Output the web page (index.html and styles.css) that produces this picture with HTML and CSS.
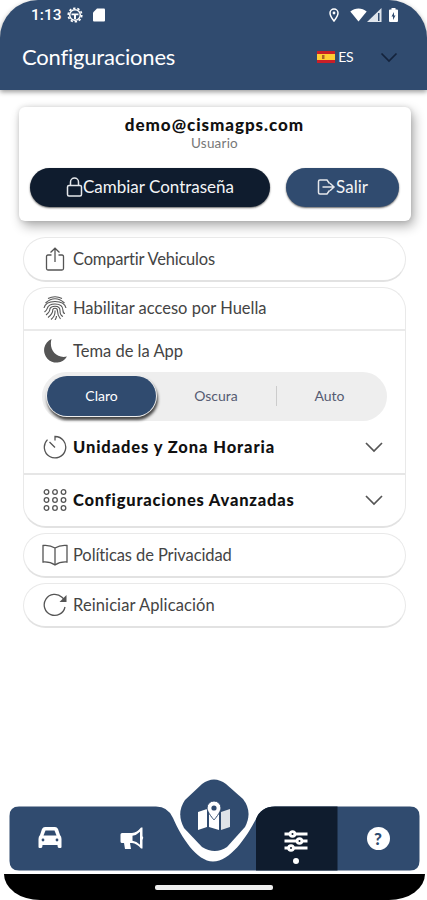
FILE: index.html
```
<!DOCTYPE html>
<html lang="es">
<head>
  <meta charset="UTF-8">
  <meta name="viewport" content="width=device-width, initial-scale=1">
  <title>Configuraciones</title>
  <link rel="stylesheet" href="styles.css">
</head>
<body>
  <header class="header">
    <div class="status-bar">
      <span class="time">1:13</span>
      <svg class="gear" width="16" height="16" viewBox="0 0 16 16">
        <circle cx="8" cy="8" r="6.8" fill="none" stroke="#fff" stroke-width="1.6" stroke-dasharray="2.4 1.87"/>
        <circle cx="8" cy="8" r="5.3" fill="none" stroke="#fff" stroke-width="1.5"/>
        <path d="M4.5 6.4h7v1.8h-7z M7 8h2v4H7z" fill="#fff"/>
      </svg>
      <svg width="12" height="14" viewBox="0 0 12 14"><path d="M4 .5h7q1 0 1 1v11q0 1-1 1H1q-1 0-1-1V4.5z" fill="#fff"/></svg>
      <div class="status-right">
        <svg class="pin" width="10" height="14" viewBox="0 0 10 14"><path d="M5 1a4 4 0 0 1 4 4c0 3-4 8-4 8S1 8 1 5a4 4 0 0 1 4-4z" fill="none" stroke="#fff" stroke-width="1.5"/><circle cx="5" cy="5" r="1.4" fill="#fff"/></svg>
        <svg class="wifi" width="17" height="14" viewBox="0 0 17 14"><path d="M.3 3.5C5-.6 12-.6 16.7 3.5L8.5 13.6z" fill="#fff"/></svg>
        <svg class="signal" width="15" height="14" viewBox="0 0 15 14"><path d="M14.5 0v14H0z" fill="#dfe5ec"/><path d="M11 5h1.5v8H11z" fill="#304b6f"/></svg>
        <svg width="9" height="14" viewBox="0 0 9 14"><path d="M2.500 0h4v1.500H8q1 0 1 1V13q0 1-1 1H1q-1 0-1-1V2.500q0-1 1-1h1.500z" fill="#fff"/><path d="M5 4 2.500 8.500H4V12l2.500-4.500H5z" fill="#304b6f"/></svg>
      </div>
    </div>
    <div class="title-bar">
      <h1>Configuraciones</h1>
      <div class="lang">
        <svg width="18" height="12" viewBox="0 0 18 12"><path d="M0 0h18v12H0z" fill="#c91f27"/><path d="M0 3h18v6H0z" fill="#fc3"/><path d="M5 4h2.500v4H5z" fill="#ad6228"/></svg>
        <span>ES</span>
        <svg class="lang-arrow" width="18" height="11" viewBox="0 0 18 11"><path d="m1.500 1.500 7.500 7.500 7.500-7.500" fill="none" stroke="#14233c" stroke-width="1.700"/></svg>
      </div>
    </div>
  </header>

  <main>
    <section class="user-card">
      <div class="email">demo@cismagps.com</div>
      <div class="role">Usuario</div>
      <div class="buttons">
        <button class="btn btn-dark">
          <svg width="17" height="20" viewBox="0 0 17 20" fill="none" stroke="#e5e8ec" stroke-width="1.500"><rect x="1.500" y="8.500" width="14" height="10.500" rx="1.500"/><path d="M4.500 8.500V5a4 4 0 0 1 8 0v3.500"/></svg>
          <span>Cambiar Contraseña</span>
        </button>
        <button class="btn btn-blue">
          <svg width="19" height="16" viewBox="0 0 19 16" fill="none" stroke="#e5e8ec" stroke-width="1.500"><path d="M12.500 4.500 10 1H3Q1.500 1 1.500 2.500v11Q1.500 15 3 15h7l2.500-3.500M5.500 8H17M13 4.200 17 8l-4 3.800"/></svg>
          <span>Salir</span>
        </button>
      </div>
    </section>

    <section class="box row share">
      <svg class="icon" viewBox="0 0 24 24"><path d="M8.500 8H5Q3.500 8 3.500 9.500v12Q3.500 23 5 23h14q1.500 0 1.500-1.500v-12Q20.500 8 19 8h-3.500M12 15V1.500M7.500 5.500 12 1.200l4.500 4.300"/></svg>
      <span class="share-text">Compartir Vehiculos</span>
    </section>

    <section class="box group">
      <div class="row finger">
        <svg class="icon print" viewBox="0 0 24 24"><path d="M5 2.500Q12-1 19 2.500M2.500 7Q12-1.500 21.500 7M1 12Q2.500 5.500 12 5.500T23 12M1.500 16Q4 14 4.200 12.500Q5.500 8 12 8q8 0 8 6.500 0 3 2 3M3 19q4-3 4-6.500 1-2.200 5-2.200 5 0 5 4.200 0 5 3 6M5 21.500q5-3.500 4.800-8 .7-1.200 2.200-1.200 2.500 0 2.500 2.700 0 4.500 3 8M8 23.500q4.500-3.500 4-9M12 24q1.500-2 1.500-4"/></svg>
        <span>Habilitar acceso por Huella</span>
      </div>
      <div class="theme">
        <div class="row theme-head">
          <svg class="icon moon" viewBox="0 0 24 24"><path d="M8.500 0A12.300 12.300 0 1 0 24 17.500C13.500 20 5.500 11 8.500 0z"/></svg>
          <span>Tema de la App</span>
        </div>
        <div class="segment">
          <div class="option active">Claro</div>
          <div class="option">Oscura</div>
          <div class="option auto">Auto</div>
        </div>
      </div>
      <div class="row units">
        <svg class="icon" viewBox="0 0 24 24"><path d="M12 5.500V1.500A10.700 10.700 0 1 1 4.500 4.600M6.500 7l5.500 5.500"/></svg>
        <span>Unidades y Zona Horaria</span>
        <svg class="arrow" width="18" height="11" viewBox="0 0 18 11"><path d="m1 1 8 8 8-8"/></svg>
      </div>
      <div class="row advanced">
        <svg class="icon" viewBox="0 0 24 24"><circle cx="3.500" cy="4" r="2.300"/><circle cx="12" cy="4" r="2.300"/><circle cx="20.500" cy="4" r="2.300"/><circle cx="3.500" cy="12" r="2.300"/><circle cx="12" cy="12" r="2.300"/><circle cx="20.500" cy="12" r="2.300"/><circle cx="3.500" cy="20" r="2.300"/><circle cx="12" cy="20" r="2.300"/><circle cx="20.500" cy="20" r="2.300"/></svg>
        <span>Configuraciones Avanzadas</span>
        <svg class="arrow" width="18" height="11" viewBox="0 0 18 11"><path d="m1 1 8 8 8-8"/></svg>
      </div>
    </section>

    <section class="box row">
      <svg class="icon book" viewBox="0 0 26 22"><path d="M13 4Q8 .8 1 1.500v16.500q7-.5 12 3 5-3.500 12-3V1.500Q18 .8 13 4zM13 4v17"/></svg>
      <span class="privacy-text">Políticas de Privacidad</span>
    </section>

    <section class="box row">
      <svg class="icon" viewBox="0 0 24 24"><path d="M22 14A10.500 10.500 0 1 1 19 4.300l3.500 3.500"/><path d="M23.500 2v7h-7z" fill="#555" stroke="none"/></svg>
      <span class="reset-text">Reiniciar Aplicación</span>
    </section>
  </main>

  <nav class="nav">
    <svg class="nav-shape" width="427" height="98" viewBox="0 776 427 98">
      <path d="M19 806.500H156Q168 806.500 173 818C181 837 197 861.500 213 861.500C230 861.500 246 838 256 819Q261 806.500 275 806.500H410Q419.500 806.500 419.500 816V861Q419.500 870.500 410 870.500H19Q9.500 870.500 9.500 861V816Q9.500 806.500 19 806.500z" fill="#304b6f"/>
      <path d="M256 870.500V819Q261 806.500 275 806.500H337.500V870.500z" fill="#0f1c2e"/>
      <path d="M202 784Q214 775 226 784L243 799Q253 812 245 827L227 847Q215 855 202 847L184 828Q176 813 185 800z" fill="#304b6f"/>
    </svg>
    <a class="tab"><svg width="24" height="22" viewBox="0 0 24 22"><path d="M7 0h10q2 0 3 2l2 6q1.500 1.500 1.500 4v8q0 1-1 1H21q-1.500 0-1.500-3h-15q0 3-1.500 3H1.500q-1 0-1-1v-8q0-2.500 1.500-4l2-6q1-2 3-2z" fill="#fff"/><path d="M7.500 3.500h9l2 5h-13z" fill="#304b6f"/><circle cx="5" cy="13" r="1.400" fill="#304b6f"/><circle cx="19" cy="13" r="1.400" fill="#304b6f"/></svg></a>
    <a class="tab"><svg width="24" height="23" viewBox="0 0 24 23"><path d="M2 6h10q5-.5 9-5.500h1.500V9q1.500 1.500 0 4v8.500H21q-4-5-9-5.500h-2l1 6H5l-1-6H2q-1.500 0-1.500-1.500v-7Q.500 6 2 6z" fill="#fff"/><path d="M12.500 8.800q4-.5 7.500-4v13q-3.500-3.500-7.500-4z" fill="#304b6f"/></svg></a>
    <a class="tab map"><svg width="32" height="29" viewBox="0 0 32 29" fill="#fff"><path d="M0 11l9-3v18l-9 3zM11 9l10 3v17l-10-3z"/><path d="M23 11l9-3v18l-9 3z" fill="#dfe3e8"/><path d="M16 0a7 7 0 0 1 7 7c0 4-7 12-7 12S9 11 9 7a7 7 0 0 1 7-7z" stroke="#304b6f" stroke-width="1"/><circle cx="16" cy="7" r="2.600" fill="#304b6f"/></svg></a>
    <a class="tab current"><svg width="24" height="22" viewBox="0 0 24 22" fill="#0f1c2e" stroke="#fff" stroke-width="2.800"><path d="M.5 4h23M.5 11h23M.5 18h23"/><circle cx="8.500" cy="4" r="2.400"/><circle cx="15.500" cy="11" r="2.400"/><circle cx="7" cy="18" r="2.400"/></svg><i class="dot"></i></a>
    <a class="tab"><b class="help">?</b></a>
  </nav>
  <footer class="home-bar"><span class="handle"></span></footer>
</body>
</html>
```
FILE: styles.css
```
* {
  box-sizing: border-box;
}

body {
  margin: 0;
  width: 427px;
  height: 900px;
  overflow: hidden;
  display: flex;
  flex-direction: column;
  background: #fff;
  color: #444;
  font-family: Lato, sans-serif;
}

svg {
  display: block;
  flex-shrink: 0;
}

.header {
  height: 90px;
  background: #304b6f;
  border-radius: 38px 38px 0 0;
  box-shadow: 0 2px 5px rgba(0, 0, 0, 0.4);
  color: #fff;
}

.status-bar {
  height: 30px;
  padding: 0 29px 0 31px;
  display: flex;
  align-items: center;
}

.time {
  width: 36px;
  font: 500 15.5px Roboto, sans-serif;
}

.gear {
  margin-right: 10px;
}

.status-right {
  margin-left: auto;
  display: flex;
  align-items: center;
}

.pin {
  margin-right: 11px;
}

.wifi {
  margin-right: 0;
}

.signal {
  margin-right: 7px;
}

.title-bar {
  height: 54px;
  padding: 0 29px 0 22px;
  display: flex;
  align-items: center;
  justify-content: space-between;
}

h1 {
  margin: 0;
  padding-bottom: 1px;
  font-size: 22px;
  font-weight: 400;
  letter-spacing: -0.2px;
}

.lang {
  display: flex;
  align-items: center;
  font-size: 14px;
}

.lang span {
  margin-left: 3px;
  padding-bottom: 1px;
  letter-spacing: -0.5px;
}

.lang-arrow {
  margin-left: 27px;
}

main {
  flex: 1;
  padding: 17px 21px 0 19px;
}

.user-card {
  width: 392px;
  height: 114px;
  padding: 8px 12px 0 11px;
  border-radius: 6px;
  box-shadow: 3px 5px 12px rgba(0, 0, 0, 0.32), 0 0 5px rgba(0, 0, 0, 0.12);
  text-align: center;
}

.email {
  height: 20px;
  line-height: 20px;
  font-size: 17px;
  font-weight: 900;
  letter-spacing: 0.95px;
  color: #111;
}

.role {
  height: 16px;
  line-height: 16px;
  font-size: 13.5px;
  letter-spacing: 0.2px;
  color: #777;
}

.buttons {
  display: flex;
  gap: 16px;
  margin-top: 17px;
}

.btn {
  height: 39px;
  padding: 0 0 2px;
  border: none;
  border-radius: 20px;
  display: flex;
  align-items: center;
  justify-content: center;
  color: #f3f4f6;
  font: 400 17px Lato, sans-serif;
  box-shadow: 0 1px 2px rgba(0, 0, 0, 0.6);
}

.btn-dark {
  width: 240px;
  background: #0f1c2e;
}

.btn-blue {
  width: 113px;
  background: #304b6f;
}

.box {
  width: 383px;
  height: 45px;
  margin: 0 0 5px 4px;
  border: 1px solid #e9e9e9;
  border-bottom: 2px solid #e2e2e2;
  border-radius: 23px;
}

.share {
  margin-top: 16px;
}

.row {
  display: flex;
  align-items: center;
  padding: 0 22px 0 19px;
  font-size: 16.5px;
}

.share-text {
  letter-spacing: -0.2px;
}

.privacy-text {
  letter-spacing: -0.1px;
}

.reset-text {
  letter-spacing: 0.1px;
}

.icon {
  width: 24px;
  height: 24px;
  margin-right: 6px;
  fill: none;
  stroke: #555;
  stroke-width: 1.3;
}

.print {
  stroke-width: 1.1;
}

.moon {
  fill: #555;
  stroke: none;
}

.book {
  width: 26px;
  height: 22px;
  margin: 0 5px 0 -1px;
}

.group {
  height: 241px;
}

.finger {
  height: 43px;
  padding-bottom: 2px;
  border-bottom: 2px solid #eaeaea;
}

.theme-head {
  height: 41px;
  padding-bottom: 2px;
}

.segment {
  width: 345px;
  height: 49px;
  margin-left: 18px;
  padding: 0 5px 2px;
  display: flex;
  align-items: center;
  border-radius: 25px;
  background: #eee;
}

.option {
  flex: 0 0 120px;
  text-align: center;
  font-size: 14px;
  line-height: 20px;
  color: #555b72;
}

.active {
  flex: 0 0 109px;
  line-height: 40px;
  border-radius: 20px;
  background: #304b6f;
  color: #fff;
  box-shadow: 0 0 0 1px #eee, 1px 3px 3px 1px #444;
}

.auto {
  flex: 1;
  border-left: 1px solid #ccc;
}

.units,
.advanced {
  font-weight: 900;
  letter-spacing: 0.9px;
  color: #111;
}

.advanced {
  letter-spacing: 0.8px;
}

.units {
  height: 54px;
  border-bottom: 2px solid #e6e6e6;
}

.advanced {
  height: 50px;
}

.arrow {
  margin-left: auto;
  fill: none;
  stroke: #555;
  stroke-width: 1.7;
}

.nav {
  position: relative;
  height: 98px;
  padding: 30px 8px 4px 9px;
  display: flex;
}

.nav-shape {
  position: absolute;
  left: 0;
  top: 0;
}

.tab {
  position: relative;
  flex: 1;
  display: flex;
  flex-direction: column;
  align-items: center;
  justify-content: center;
}

.map {
  padding-bottom: 46px;
}

.current {
  padding-top: 17px;
}

.dot {
  width: 6px;
  height: 6px;
  margin-top: 6px;
  border-radius: 50%;
  background: #fff;
}

.help {
  width: 23px;
  height: 23px;
  border-radius: 50%;
  background: #fff;
  color: #304b6f;
  text-align: center;
  font: 900 17px/23px Lato, sans-serif;
}

.home-bar {
  width: 421px;
  height: 26px;
  margin-left: 4px;
  padding-top: 11px;
  background: #000;
  border-radius: 0 0 36px 36px / 0 0 26px 26px;
}

.handle {
  display: block;
  width: 118px;
  height: 5px;
  margin-left: 151px;
  border-radius: 2px;
  background: #eee;
}
```
